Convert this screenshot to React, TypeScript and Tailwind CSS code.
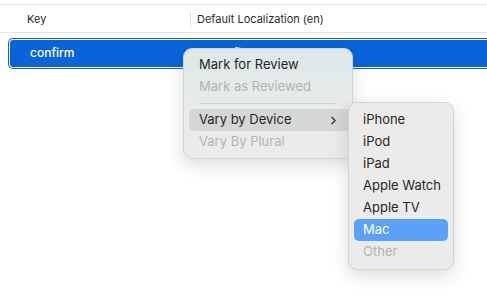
import { ChevronRight } from "lucide-react";

const devices = ["iPhone", "iPod", "iPad", "Apple Watch", "Apple TV"];

export default function App() {
  return (
    <div
      className="relative h-[305px] w-[487px] overflow-hidden bg-white text-[#262626]"
      style={{ fontFamily: "Inter, 'Noto Sans', sans-serif" }}
    >
      {/* Table header */}
      <div className="mt-[4px] flex h-[29px] items-center border-y border-[#e4e4e4] pt-px text-[11px] text-[#2a2a2a]">
        <div className="w-[190px] pl-[27px]">Key</div>
        <div className="h-[15px] w-px bg-[#dcdcdc]" />
        <div className="pl-[6px]">Default Localization (en)</div>
      </div>

      {/* Selected row */}
      <div className="ml-[8px] mt-[5px] h-[31px] rounded-l-[5px] border border-r-0 border-[#1565d8] bg-white p-px pr-0">
        <div className="flex h-full items-center whitespace-nowrap rounded-l-[3px] bg-[#0a63d8] pb-px pl-[20px] text-[12px] font-medium text-white">
          <span className="w-[182px]">confirm</span>
          <span>confirm</span>
        </div>
      </div>

      {/* Context menu */}
      <div className="absolute left-[183px] top-[48px] w-[170px] whitespace-nowrap rounded-[9px] border border-[#d3d5d5] bg-gradient-to-b from-[#dce8e8] via-[#e8ebea] to-[#ebebeb] px-[5px] py-[5px] text-[13px] shadow-[0_6px_18px_rgba(0,0,0,0.14)]">
        <div className="flex h-[22px] items-center px-[10px]">Mark for Review</div>
        <div className="flex h-[22px] items-center px-[10px] text-[#b3b5b5]">Mark as Reviewed</div>
        <div className="mx-[10px] my-[5px] h-px bg-[#cfd1d1]" />
        <div className="-mr-[6px] flex h-[22px] items-center justify-between rounded-l-[5px] bg-[#d5d7d7] pl-[10px] pr-[13px]">
          <span>Vary by Device</span>
          <ChevronRight size={13} strokeWidth={2.4} className="text-[#333]" />
        </div>
        <div className="flex h-[22px] items-center px-[10px] text-[#b3b5b5]">Vary By Plural</div>
      </div>

      {/* Submenu */}
      <div className="absolute left-[348px] top-[102px] w-[106px] whitespace-nowrap rounded-[9px] border border-[#d3d3d3] bg-[#ebebeb] px-[5px] py-[6px] text-[13px] shadow-[0_6px_18px_rgba(0,0,0,0.14)]">
        {devices.map((d) => (
          <div key={d} className="flex h-[22px] items-center px-[9px]">
            {d}
          </div>
        ))}
        <div className="flex h-[22px] items-center rounded-[5px] bg-[#5aa1f8] px-[9px] text-white">Mac</div>
        <div className="flex h-[22px] items-center px-[9px] text-[#b3b3b3]">Other</div>
      </div>
    </div>
  );
}
